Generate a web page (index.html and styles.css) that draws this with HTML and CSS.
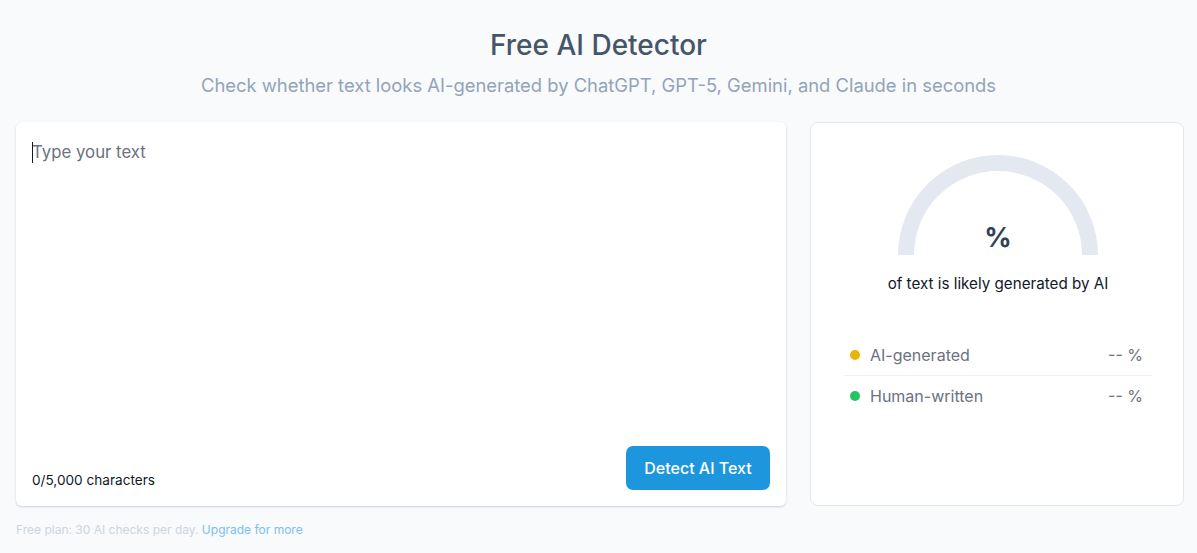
FILE: index.html
```
<!DOCTYPE html>
<html lang="en">
<head>
<meta charset="utf-8">
<title>Free AI Detector</title>
<link rel="stylesheet" href="styles.css">
</head>
<body>
<header class="hero">
  <h1 class="hero-title">Free AI Detector</h1>
  <p class="hero-sub">Check whether text looks AI-generated by ChatGPT, GPT-5, Gemini, and Claude in seconds</p>
</header>
<main class="layout">
  <section class="editor-card">
    <div class="editor-field">
      <span class="caret"></span>
      <textarea class="editor-input" placeholder="Type your text"></textarea>
    </div>
    <div class="editor-footer">
      <span class="char-count">0/5,000 characters</span>
      <button class="detect-btn" type="button">Detect AI Text</button>
    </div>
  </section>
  <aside class="result-card">
    <div class="gauge">
      <svg class="gauge-svg" width="200" height="100" viewBox="0 0 200 100">
        <path d="M8 100 A92 92 0 0 1 192 100" fill="none" stroke="#e4e9f1" stroke-width="16"/>
      </svg>
      <span class="gauge-value">%</span>
    </div>
    <p class="gauge-caption">of text is likely generated by AI</p>
    <ul class="legend">
      <li class="legend-row">
        <span class="dot dot-ai"></span>
        <span class="legend-label">AI-generated</span>
        <span class="legend-value">-- %</span>
      </li>
      <li class="legend-row">
        <span class="dot dot-human"></span>
        <span class="legend-label">Human-written</span>
        <span class="legend-value">-- %</span>
      </li>
    </ul>
  </aside>
</main>
<p class="plan-note">Free plan: 30 AI checks per day. <a class="plan-link" href="#">Upgrade for more</a></p>
</body>
</html>
```
FILE: styles.css
```
* { box-sizing: border-box; }
html, body { margin: 0; padding: 0; }
body {
  background: #f8fafc;
  font-family: Inter, "Noto Sans", "Liberation Sans", sans-serif;
  color: #111827;
}
.hero {
  text-align: center;
  padding-top: 27px;
}
.hero-title {
  margin: 0;
  font-size: 28px;
  line-height: 36px;
  font-weight: 500;
  color: #475569;
}
.hero-sub {
  margin: 9px 0 0;
  font-size: 18.4px;
  line-height: 26px;
  font-weight: 400;
  color: #94a3b8;
}
.layout {
  display: grid;
  grid-template-columns: 770px 374px;
  column-gap: 24px;
  padding-left: 16px;
  margin-top: 24px;
}
.editor-card {
  height: 384px;
  background: #fff;
  border-radius: 6px;
  box-shadow: 0 1px 3px rgba(15, 23, 42, 0.12), 0 1px 2px rgba(15, 23, 42, 0.06);
  padding: 18px 16px 16px;
  display: flex;
  flex-direction: column;
}
.editor-field {
  position: relative;
  flex: 1;
  display: flex;
}
.editor-input {
  flex: 1;
  border: none;
  outline: none;
  resize: none;
  padding: 0;
  font-family: inherit;
  font-size: 16.8px;
  line-height: 24px;
  color: #111827;
  background: transparent;
}
.editor-input::placeholder { color: #6b7280; }
.caret {
  position: absolute;
  left: 0;
  top: 2px;
  width: 1px;
  height: 21px;
  background: #111827;
}
.editor-footer {
  display: flex;
  justify-content: space-between;
  align-items: flex-end;
}
.char-count {
  font-size: 13.6px;
  line-height: 20px;
  color: #111827;
}
.detect-btn {
  width: 144px;
  height: 44px;
  border: none;
  border-radius: 7px;
  background: #1e96dd;
  color: #fff;
  font-family: inherit;
  font-size: 16px;
  font-weight: 500;
  cursor: pointer;
}
.result-card {
  height: 384px;
  background: #fff;
  border: 1px solid #e5e7eb;
  border-radius: 8px;
  padding: 32px 31px 0 33px;
  display: flex;
  flex-direction: column;
  align-items: center;
}
.gauge {
  position: relative;
  width: 200px;
  height: 100px;
}
.gauge-svg { display: block; }
.gauge-value {
  position: absolute;
  left: 0;
  right: 0;
  bottom: 0;
  text-align: center;
  font-size: 27px;
  line-height: 34px;
  font-weight: 700;
  color: #334155;
}
.gauge-caption {
  margin: 19px 0 0;
  font-size: 15.2px;
  line-height: 20px;
  color: #111827;
}
.legend {
  list-style: none;
  margin: 41px 0 0;
  padding: 0;
  align-self: stretch;
}
.legend-row {
  display: flex;
  align-items: center;
  padding: 10px 9px 10px 6px;
  font-size: 16px;
  line-height: 20px;
  color: #6b7280;
}
.legend-row + .legend-row { border-top: 1px solid #eef1f5; }
.dot {
  width: 10px;
  height: 10px;
  border-radius: 50%;
  margin-right: 10px;
}
.dot-ai { background: #eab308; }
.dot-human { background: #22c55e; }
.legend-label { flex: 1; }
.legend-value { color: #6b7280; }
.plan-note {
  margin: 16px 0 0 16px;
  font-size: 12px;
  line-height: 16px;
  color: #cbd5e1;
}
.plan-link {
  color: #7cc1ea;
  text-decoration: none;
}
```
